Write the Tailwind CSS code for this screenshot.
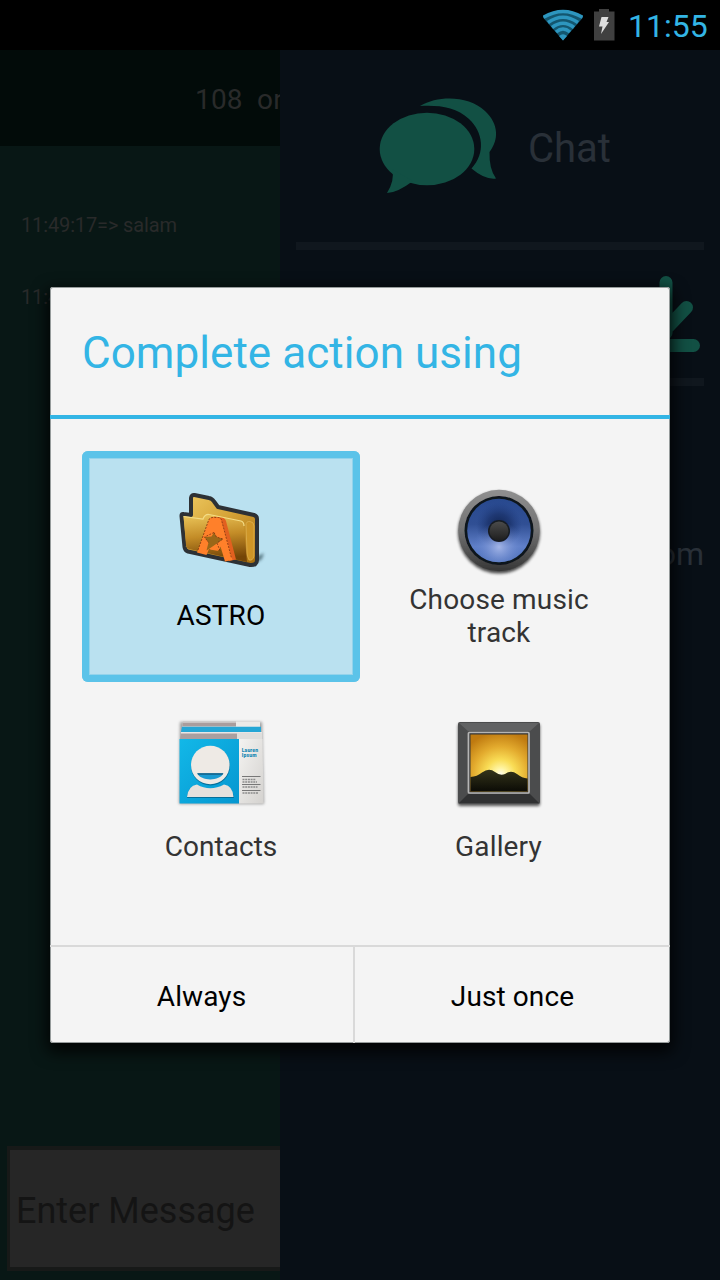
<!DOCTYPE html>
<html lang="en">
<head>
<meta charset="utf-8">
<meta name="viewport" content="width=device-width, initial-scale=1">
<title>Complete action using</title>
<script src="https://cdn.jsdelivr.net/npm/@tailwindcss/browser@4"></script>
</head>
<body class="bg-black">
<div class="relative flex h-[1280px] w-[720px] flex-col overflow-hidden bg-black font-['Roboto',sans-serif] whitespace-nowrap">

  <!-- Status bar -->
  <header class="flex h-[50px] shrink-0 items-center justify-end pr-3 text-[#33b5e5]">
    <svg class="h-[50px] w-[40px]" viewBox="543 0 40 50" fill="none">
      <path d="M543 17.5Q563 2.500 583 17.500L563 40.500Z" fill="#13566f"/>
      <g stroke="#2d96bf" stroke-width="3.500">
        <path d="M543.500 17.300Q563 5.500 582.500 17.300"/>
        <path d="M548 22.500Q563 12 578 22.500"/>
        <path d="M552 27.500Q563 19 574 27.500"/>
        <path d="M556 32Q563 26 570 32"/>
      </g>
      <path d="M559 36Q563 32.500 567 36L563 40.500Z" fill="#2d96bf"/>
    </svg>
    <svg class="ml-[10px] h-[50px] w-[22px]" viewBox="593 0 22 50">
      <path d="M594 11.500H599V9H609V11.500H614.500V40.500H594Z" fill="#404040"/>
      <path d="M601.500 17H608.500L606.500 22H609L601 34L602.500 26.500H599Z" fill="#dedede"/>
    </svg>
    <span class="ml-[13px] w-[80px] pt-[2px] text-[32px] leading-[50px]">11:55</span>
  </header>

  <div class="flex min-h-0 flex-1">
    <!-- Conversation -->
    <main class="flex w-[280px] flex-col overflow-hidden bg-[#081715] text-[#292a2a]">
      <div class="h-24 shrink-0 bg-[#020b09] pl-[195px] text-[28px] leading-[100px] tracking-[0.2px] whitespace-pre">108  online</div>
      <div class="flex flex-1 flex-col pt-[60px] pl-[21px] text-[20px] leading-[38px] tracking-[-0.13px]">
        <p>11:49:17=&gt; salam</p>
        <p class="mt-[34px]">11:49:32=&gt; salam</p>
      </div>
      <div class="mb-[9px] ml-[7px] h-[125px] w-[400px] shrink-0 border-x-[3px] border-y-4 border-[#171918] bg-[#262626] pl-[6px] text-[36px] leading-[123px] text-[#141414]">Enter Message</div>
    </main>

    <!-- Side menu -->
    <nav class="flex w-[440px] flex-col bg-[#080f16] px-4 text-[#293038]">
      <div class="flex h-[192px] shrink-0 items-start">
        <svg class="mt-[45px] ml-[82px] h-[102px] w-[122px] shrink-0" viewBox="378 95 122 102" fill="#125044">
          <ellipse cx="427" cy="149" rx="47.300" ry="36.300"/>
          <path d="M392 169Q395 180 387 193Q397 193 413 181Z"/>
          <path d="M420 106C439 95 469 96 485 111C499 124 499 140 489.500 152Q489 169 496 178.500Q485 180 471.500 168.500C486 153 483 132 469 119C456 107 439 105 420 106Z"/>
        </svg>
        <span class="mt-[74px] ml-[28px] text-[40px] leading-[50px]">Chat</span>
      </div>
      <div class="h-2 shrink-0 bg-[#10171e]"></div>
      <div class="flex h-32 shrink-0 justify-end">
        <svg class="mt-[21px] h-[84px] w-[84px]" viewBox="620 271 84 84" fill="none" stroke="#125044" stroke-width="13" stroke-linecap="round">
          <path d="M666 282.500V333M645 307L666 329L686.500 307.500M637 345.500H693.500"/>
        </svg>
      </div>
      <div class="h-2 shrink-0 bg-[#10171e]"></div>
      <div class="mt-[148px] self-end text-[32px] leading-[40px]">example@mail.com</div>
    </nav>
  </div>

  <!-- Chooser dialog -->
  <section class="absolute top-[287px] left-[50px] flex h-[756px] w-[620px] flex-col rounded-[3px] bg-[#f4f4f4] shadow-[inset_0_0_0_1px_#969b9b,0_6px_16px_3px_rgba(0,0,0,0.85)]">
    <h1 class="h-[128px] shrink-0 pl-8 text-[44px] leading-[133px] tracking-[0.06px] text-[#33b5e5]">Complete action using</h1>
    <div class="h-1 shrink-0 bg-[#33b5e5]"></div>

    <div class="mx-8 mt-8 grid grid-cols-2 grid-rows-[231px_231px] text-[28px] leading-[33px] tracking-[0.15px] text-[#333]">
      <div class="flex flex-col items-center rounded-[6px] bg-[#bae1f0] pt-8 text-black shadow-[inset_0_0_0_7px_#5bc3e9,inset_0_0_0_8px_#94d3eb]">
        <svg class="h-24 w-24" viewBox="173 483 96 96">
          <defs>
            <linearGradient id="fb" x1="0" y1="0" x2="1" y2="1"><stop offset="0" stop-color="#efcb62"/><stop offset=".45" stop-color="#d6a438"/><stop offset="1" stop-color="#a56b0a"/></linearGradient>
            <linearGradient id="ff" x1="0" y1="0" x2=".15" y2="1"><stop offset="0" stop-color="#ecc75b"/><stop offset=".5" stop-color="#c38c27"/><stop offset="1" stop-color="#744507"/></linearGradient>
            <filter id="soft" x="-50%" y="-50%" width="200%" height="200%"><feGaussianBlur stdDeviation="1.800"/></filter>
          </defs>
          <path d="M250 560L264 553L262 559L252 566Z" fill="#38545f" opacity=".7" filter="url(#soft)"/>
          <path d="M191 498Q191.500 494.500 194.500 495L209 498Q212 498.500 214 501.500L218 507L254 515Q257 516 257 519V560Q257 565.500 250 565L188 551.500Q185 550.500 184.500 547L181.500 516Q181.300 513.500 183.500 514L191 515Z" fill="url(#fb)" stroke="#2d3135" stroke-width="4" stroke-linejoin="round"/>
          <path d="M183.500 516.500L203 519Q205 514 209 514.500L241 521Q244 522 244 526L247 562L189 549Q186.500 548 186 545Z" fill="url(#ff)"/>
          <path d="M183.500 516.500L203 519Q205 514 209 514.500L241 521Q244 522 244 526" fill="none" stroke="#f3dc85" stroke-width="1.200"/>
          <path d="M246 525Q246 521 250 521.500Q254 522 254 526V556Q253 561 249 560Q247 556 247 553Z" fill="#ce9527" stroke="#e1b454" stroke-width=".7"/>
          <path d="M214 516.500L223.500 518Q225.500 519 226 521L236 559.500L229 561L221 533Z" fill="#e2601f"/>
          <path d="M197 552.500L208.500 520.500Q209.500 517 213 517H218Q220.500 517 221.500 520L232.500 560L225 561.500L220.500 546.500L219 550L209 549L206.500 555Z" fill="#ff802a"/>
          <path d="M214 532.500L216.500 537L223 539L217.500 543L214 545.500L206.500 550.500L208.500 542.500L204.500 537L211.500 536.500Z" fill="#9a6718"/>
          <path d="M214.500 546L218.500 551L210 549.500Z" fill="#ff802a"/>
          <path d="M198 550L208.500 520.500Q209.500 517.500 213 517.500H218Q220.500 517.500 221.500 520L231.500 558M214 532.500L204.500 537L208.500 542.500M214 532.500L216.500 537L223 539L217 543L220.500 552" fill="none" stroke="#6b2b0d" stroke-width=".7" stroke-dasharray="2 1.200"/>
        </svg>
        <div class="mt-[3px] flex h-[66px] items-center">ASTRO</div>
      </div>

      <div class="flex flex-col items-center pt-8">
        <svg class="h-24 w-24" viewBox="451 483 96 96">
          <defs>
            <linearGradient id="rim" x1="0" y1="0" x2="0" y2="1"><stop offset="0" stop-color="#909090"/><stop offset=".5" stop-color="#717171"/><stop offset="1" stop-color="#353535"/></linearGradient>
            <linearGradient id="cone" x1="0" y1="0" x2="0" y2="1"><stop offset="0" stop-color="#28498f"/><stop offset=".4" stop-color="#304f94"/><stop offset=".75" stop-color="#5f7fc8"/><stop offset="1" stop-color="#4d70ba"/></linearGradient>
            <radialGradient id="glow" cx=".5" cy=".76" r=".4"><stop offset="0" stop-color="#a3b5e6"/><stop offset="1" stop-color="#6080cc" stop-opacity="0"/></radialGradient>
            <radialGradient id="pit" cx=".5" cy=".42" r=".36"><stop offset="0" stop-color="#10234f"/><stop offset=".5" stop-color="#182f66" stop-opacity=".7"/><stop offset="1" stop-color="#203d80" stop-opacity="0"/></radialGradient>
            <linearGradient id="cap" x1="0" y1="0" x2="0" y2="1"><stop offset="0" stop-color="#4b4b4b"/><stop offset="1" stop-color="#1e1e1e"/></linearGradient>
            <filter id="edge"><feGaussianBlur stdDeviation=".6"/></filter>
          </defs>
          <circle cx="499" cy="532.500" r="41" opacity=".7" filter="url(#soft)"/>
          <circle cx="499" cy="530.500" r="40.700" fill="url(#rim)" filter="url(#edge)"/>
          <circle cx="499" cy="530.500" r="34.500" fill="#10131b" filter="url(#edge)"/>
          <circle cx="499" cy="530.500" r="31.800" fill="url(#cone)"/>
          <circle cx="499" cy="530.500" r="31.800" fill="url(#pit)"/>
          <circle cx="499" cy="530.500" r="31.800" fill="url(#glow)"/>
          <circle cx="499" cy="531" r="11" fill="#171b23" filter="url(#edge)"/>
          <circle cx="499" cy="531" r="9.500" fill="url(#cap)"/>
        </svg>
        <div class="mt-1 flex h-[66px] items-center text-center"><span>Choose music<br>track</span></div>
      </div>

      <div class="flex flex-col items-center pt-8">
        <svg class="h-24 w-24" viewBox="173 714 96 96">
          <defs>
            <linearGradient id="blue" x1="0" y1="0" x2="1" y2="1"><stop offset="0" stop-color="#12b8e8"/><stop offset="1" stop-color="#0596d0"/></linearGradient>
            <linearGradient id="paper" x1="0" y1="0" x2="1" y2="1"><stop offset="0" stop-color="#f4f3f1"/><stop offset="1" stop-color="#d4d2cf"/></linearGradient>
          </defs>
          <path d="M180 722H262L264 804H179Z" opacity=".35" filter="url(#soft)"/>
          <path d="M183 721.500H260V727H182Z" fill="#c9c3c2"/><path d="M183 723H236V726H182.500Z" fill="#a99d9d"/><path d="M236 721.500H260V727H236Z" fill="#eceae8"/>
          <path d="M182 726.700H261V732H181Z" fill="#25a6d5"/>
          <path d="M181 732H237V739H180Z" fill="#aa9fa0"/><path d="M181 732H262V733.500H181Z" fill="#e9e6e5"/><path d="M237 733H262V739H237Z" fill="#dfdedc"/>
          <path d="M179.500 739H239V803.500H179.500Z" fill="url(#blue)"/>
          <path d="M239 739H262.500L263.500 803.500H239Z" fill="url(#paper)"/>
          <g fill="#075b80" opacity=".7"><circle cx="210.500" cy="766" r="19.500"/><path d="M187 798Q188 786 197 785Q210 793 224 785Q233 787 234 798Z"/></g>
          <circle cx="210.300" cy="765" r="19.300" fill="#eeeae5"/>
          <path d="M187 797Q188 786 197 784.500Q210 792 224 784.500Q233 786 233.500 797Z" fill="#e5e1dd"/>
          <path d="M197.300 773.300H223.300C220 781.500 200.500 781.500 197.300 773.300Z" fill="#1b9bd2"/>
          <path d="M197.300 773.300H223.300L222.500 774.700H198Z" fill="#145f85"/>
          <g fill="#1688b4" font-family="Roboto" font-weight="900" font-size="5"><text x="241.700" y="751.500" textLength="16.500">Lauren</text><text x="241.700" y="757" textLength="15">Ipsum</text></g>
          <path d="M242 776.500H260.500M242 784.500H260.500M242 790.500H260.500" stroke="#777" stroke-width="1"/>
          <path d="M242.500 779.500H256M242.500 782H257M242.500 787H257.500M242.500 793H258" stroke="#8b8b8b" stroke-width="1.300" stroke-dasharray="2 .7"/>
        </svg>
        <div class="mt-[3px] flex h-[66px] items-center tracking-[0.05px]">Contacts</div>
      </div>

      <div class="flex flex-col items-center pt-8">
        <svg class="h-24 w-24" viewBox="451 714 96 96">
          <defs>
            <radialGradient id="sun" cx=".53" cy=".7" r=".75"><stop offset="0" stop-color="#fffdf0"/><stop offset=".15" stop-color="#fff4a0"/><stop offset=".35" stop-color="#f9dc55"/><stop offset=".65" stop-color="#e3ab2e"/><stop offset="1" stop-color="#bf7a10"/></radialGradient>
            <linearGradient id="hill" x1="0" y1="0" x2="0" y2="1"><stop offset="0" stop-color="#34341a"/><stop offset="1" stop-color="#0b0b06"/></linearGradient>
          </defs>
          <rect x="458" y="724" width="82" height="82" rx="2" opacity=".65" filter="url(#soft)"/>
          <rect x="458" y="722" width="82" height="82" rx="2" fill="#4b4c4d"/>
          <path d="M459 723H539L529 732H469Z" fill="#616263"/>
          <path d="M459 803H539L529 793H469Z" fill="#303132"/>
          <rect x="467" y="731" width="63" height="63" rx="1.500" fill="#555"/>
          <rect x="468.500" y="732.500" width="60.500" height="60.500" rx="1" fill="#333" stroke="#b5b5b5" stroke-width="1.700"/>
          <rect x="470.500" y="734.500" width="57" height="57" fill="url(#sun)"/>
          <path d="M470.500 777Q477 776.500 482 772.500Q489 767.500 495 772Q500 776 505 774Q511 769.500 517 774Q522 778 527.500 778.500V791.500H470.500Z" fill="url(#hill)"/>
        </svg>
        <div class="mt-[3px] flex h-[66px] items-center pr-px">Gallery</div>
      </div>
    </div>

    <div class="mt-auto flex h-[98px] shrink-0 border-t-2 border-[#d9d9d9] text-[28px] leading-[100px] tracking-[0.1px] text-black">
      <button class="w-[305px] border-r-2 border-[#d9d9d9]">Always</button>
      <button class="flex-1">Just once</button>
    </div>
  </section>
</div>
</body>
</html>
